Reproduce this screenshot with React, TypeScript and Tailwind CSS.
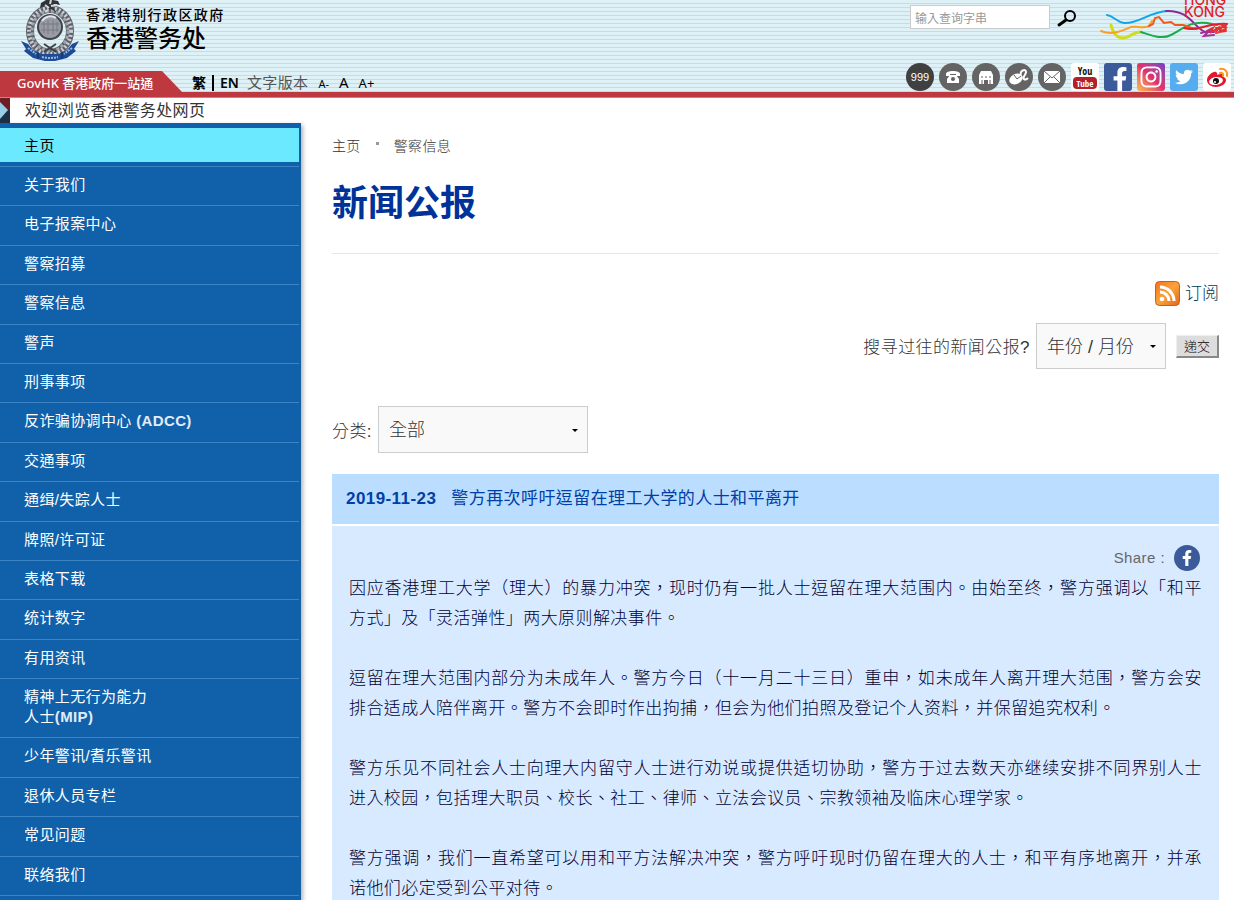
import { useState } from "react";
import { FaFacebookF, FaInstagram, FaTwitter } from "react-icons/fa";

const menu = [
  { lines: ["关于我们"] },
  { lines: ["电子报案中心"] },
  { lines: ["警察招募"] },
  { lines: ["警察信息"] },
  { lines: ["警声"] },
  { lines: ["刑事事项"] },
  { lines: ["反诈骗协调中心 "], suffix: "(ADCC)" },
  { lines: ["交通事项"] },
  { lines: ["通缉/失踪人士"] },
  { lines: ["牌照/许可证"] },
  { lines: ["表格下载"] },
  { lines: ["统计数字"] },
  { lines: ["有用资讯"] },
  { lines: ["精神上无行为能力", "人士"], suffix: "(MIP)" },
  { lines: ["少年警讯/耆乐警讯"] },
  { lines: ["退休人员专栏"] },
  { lines: ["常见问题"] },
  { lines: ["联络我们"] },
];

const paragraphs = [
  "因应香港理工大学（理大）的暴力冲突，现时仍有一批人士逗留在理大范围内。由始至终，警方强调以「和平方式」及「灵活弹性」两大原则解决事件。",
  "逗留在理大范围内部分为未成年人。警方今日（十一月二十三日）重申，如未成年人离开理大范围，警方会安排合适成人陪伴离开。警方不会即时作出拘捕，但会为他们拍照及登记个人资料，并保留追究权利。",
  "警方乐见不同社会人士向理大内留守人士进行劝说或提供适切协助，警方于过去数天亦继续安排不同界别人士进入校园，包括理大职员、校长、社工、律师、立法会议员、宗教领袖及临床心理学家。",
  "警方强调，我们一直希望可以用和平方法解决冲突，警方呼吁现时仍留在理大的人士，和平有序地离开，并承诺他们必定受到公平对待。",
];

function Emblem() {
  return (
    <svg width="60" height="64" viewBox="0 0 60 64" aria-hidden="true">
      <ellipse cx="30" cy="31" rx="20" ry="22" fill="none" stroke="#5d616a" strokeWidth="8" />
      <ellipse cx="30" cy="31" rx="21" ry="23" fill="none" stroke="#c9ccd1" strokeWidth="4" strokeDasharray="2 2" />
      <ellipse cx="30" cy="31" rx="18" ry="20" fill="none" stroke="#a1a5ad" strokeWidth="3" strokeDasharray="3 2" />
      <circle cx="30" cy="28" r="14" fill="#dcebf0" />
      <circle cx="30" cy="27" r="13" fill="#3f434b" />
      <circle cx="30" cy="27" r="11" fill="#989ba2" />
      <path d="M21 24h18M21 30h18M24 22v11M28 20v14M33 20v14M37 22v10" stroke="#777b83" />
      <path d="M22 21c3-5 10-6 14-3" stroke="#e2e4e7" strokeWidth="2" fill="none" />
      <path d="M30 10l-5-4-5 2 1-5 5-3-1-4h7l1 4 5 1 2 4-6-1-1 3 3 5-5-3-5 4z" fill="#30333a" />
      <path d="M29 8l-4-3M31 6l6-1M30 4l1-4M28 10l-3 2" stroke="#d7d9dc" strokeWidth="2" />
      <path d="M25 51l5-3 5 3M24 44l12 8M36 44l-12 8" stroke="#3c4047" strokeWidth="2" fill="none" />
      <path d="M1 41l7 3 5 6 8 4h18l8-4 5-6 7-3-5 8 2 2-9 7-12 3h-10l-12-3-9-7 2-2z" fill="#1d4b96" />
      <path d="M18 52v7M42 52v7" stroke="#0f2c61" />
      <path d="M8 48l8 6M52 48l-8 6M22 57q8 2 16 0" stroke="#9cb8e0" strokeWidth="2" strokeDasharray="2 1" fill="none" />
    </svg>
  );
}

function BrandHongKong() {
  return (
    <svg width="134" height="44" viewBox="0 0 134 44" aria-label="Hong Kong" role="img">
      <g fill="none" strokeLinecap="round" strokeWidth="2">
        <path d="M7 15c7 1 9 7 17 8 15 1 24-11 44-12" stroke="#12a5e8" />
        <path d="M66 11c24-1 27 16 39 21h9" stroke="#8c2a93" />
        <path d="M11 25c2 8 5 13 12 13 8 0 10-7 18-6" stroke="#cfdc21" strokeWidth="3" />
        <path d="M41 32c10 3 20 8 30 3 12-6 18-14 36-12l10 2" stroke="#1aab4c" />
        <path d="M1 31c12 5 22-1 30-4 10-1 14 2 18-1l3-5" stroke="#f7a021" strokeWidth="2" />
        <path d="M49 26l4-2 2-6 4-1 5 6 7-1 4 3 8 0c6 1 7 4 14 4" stroke="#f0581f" />
        <path d="M84 28c15 4 25-6 43-4" stroke="#e31e2b" />
        <path d="M107 31l6-3-3 5 8-5-2 5M114 31l8-4-3 5 7-3M116 28l9-1-5-3 6 2M119 32l7-1" stroke="#e5322d" />
        <path d="M101 33l8-2-5 5 10-1" stroke="#a5309a" />
      </g>
      <g fill="#e31e2b" fontFamily="Inter, sans-serif" fontSize="14" fontWeight="500">
        <text x="84" y="5">HONG</text>
        <text x="84" y="17">KONG</text>
      </g>
    </svg>
  );
}

const round = "flex size-7 items-center justify-center rounded-full bg-[#646464] text-white";
const square = "flex size-7 items-center justify-center rounded-[3px]";

function QuickLinks() {
  return (
    <nav aria-label="快速连结" className="flex gap-[5px]">
      <a href="#999" className="flex size-7 items-center justify-center rounded-full bg-[#404040] text-[11px] text-white">999</a>
      <a href="#phone" aria-label="电话" className={round}>
        <svg width="18" height="18" viewBox="0 0 18 18" fill="currentColor">
          <path d="M2 6c0-2 3-3 7-3s7 1 7 3v2h-4V6H6v2H2z" />
          <path d="M6 7h6l3 4v4H3v-4z" />
          <circle cx="9" cy="11" r="2" fill="#646464" />
        </svg>
      </a>
      <a href="#stations" aria-label="警署" className={round}>
        <svg width="18" height="18" viewBox="0 0 18 18" fill="currentColor">
          <path d="M4 3h10l2 4v9h-5v-4H7v4H2V7z" />
          <path d="M4 9h2M8 9h2M12 9h2M5 12v4M9 12v4M13 12v4" stroke="#646464" />
        </svg>
      </a>
      <a href="#e-report" aria-label="网上报案" className={round}>
        <svg width="22" height="20" viewBox="0 0 22 20" fill="none">
          <ellipse cx="8" cy="12" rx="7" ry="5" fill="currentColor" transform="rotate(-25 8 12)" />
          <path d="M6 8l3 4 4-3" stroke="#646464" />
          <path d="M13 8c-2-4 5-7 5-3 0 3-4 5-2 7 1 1 3 0 4-1" stroke="currentColor" strokeWidth="2" />
        </svg>
      </a>
      <a href="#mail" aria-label="电邮" className={round}>
        <svg width="16" height="12" viewBox="0 0 16 12">
          <path d="M0 0h16v12H0z" fill="currentColor" />
          <path d="M0 0l8 7 8-7M0 12l6-6M16 12l-6-6" stroke="#646464" fill="none" />
        </svg>
      </a>
      <a href="#youtube" aria-label="YouTube" className={`${square} bg-white`}>
        <svg width="26" height="26" viewBox="0 0 26 26" fontFamily="'Open Sans Condensed', 'Open Sans', sans-serif" fontWeight="700" textAnchor="middle">
          <rect x="1" y="13" width="24" height="12" rx="4" fill="#b3202a" />
          <text x="13" y="11" fontSize="10" fill="#111">You</text>
          <text x="13" y="23" fontSize="9" fill="#fff">Tube</text>
        </svg>
      </a>
      <a href="#facebook" aria-label="Facebook" className="flex size-7 items-end justify-end rounded-[3px] bg-[#3b5a9a] text-white">
        <FaFacebookF size={24} />
      </a>
      <a href="#instagram" aria-label="Instagram" className={`${square} bg-linear-to-tr from-[#fcbb45] via-[#e0306c] to-[#7638c8] text-white`}>
        <FaInstagram size={24} />
      </a>
      <a href="#twitter" aria-label="Twitter" className={`${square} bg-[#55acee] text-white`}>
        <FaTwitter size={18} />
      </a>
      <a href="#weibo" aria-label="微博" className={`${square} bg-white`}>
        <svg width="24" height="24" viewBox="0 0 24 24">
          <path d="M2 15c0-4 6-9 9-8 2 1 1 3 1 3s5-2 6 0c1 1 0 2 0 2 2 0 3 2 3 3 0 4-5 7-10 7s-9-3-9-7z" fill="#e6162d" />
          <ellipse cx="11" cy="16" rx="7" ry="4" fill="#fff" transform="rotate(-8 11 16)" />
          <circle cx="11" cy="16" r="3" fill="#111" />
          <circle cx="10" cy="17" r="1" fill="#fff" />
          <path d="M15 4c5-1 8 3 7 7M15 8c2-1 4 1 3 3" fill="none" stroke="#f59a23" strokeWidth="2" strokeLinecap="round" />
        </svg>
      </a>
    </nav>
  );
}

function Header() {
  return (
    <header className="flex justify-between border-b-[5px] border-[#bd383f] bg-[repeating-linear-gradient(#def1f6_0px,#def1f6_3px,#bbe0e9_3px,#bbe0e9_4px)]">
      <div>
        <a href="#home" className="flex h-[71px] items-start gap-[6px] pl-5 text-black">
          <Emblem />
          <span className="flex flex-col pt-[5px] font-medium">
            <span className="text-[14px] leading-5 tracking-widest">香港特别行政区政府</span>
            <span className="text-[24px] leading-7">香港警务处</span>
          </span>
        </a>
        <div className="flex h-[21px] items-center text-[14px] text-black">
          <a
            href="#govhk"
            className="flex h-full w-[182px] items-center bg-[#bd383f] pt-[5px] pl-[17px] font-['Noto_Sans','Noto_Sans_CJK_TC',sans-serif] text-[13px] font-medium text-white [clip-path:polygon(0_0,162px_0,100%_100%,0_100%)]"
          >
            GovHK 香港政府一站通
          </a>
          <nav aria-label="语言" className="flex items-center pt-[2px] pl-[10px] font-['Noto_Sans','Noto_Sans_CJK_TC',sans-serif]">
            <a href="#tc" className="border-r-2 border-black pr-[6px] leading-4 font-bold">繁</a>
            <a href="#en" className="pl-[6px] font-semibold">EN</a>
            <a href="#text" className="pl-2 text-[15px] tracking-wide text-[#555]">文字版本</a>
          </nav>
          <div className="flex items-baseline gap-[10px] pt-px pl-[10px] font-['Noto_Sans',sans-serif]">
            <button type="button" className="text-[11px]">A-</button>
            <button type="button" className="text-[15px]">A</button>
            <button type="button" className="text-[13px]">A+</button>
          </div>
        </div>
      </div>

      <div className="flex flex-col justify-between pr-[3px] pb-px">
        <div className="flex items-start justify-between">
          <form className="flex items-center gap-[6px] pt-[5px] pl-1" onSubmit={(e) => e.preventDefault()}>
            <input
              type="text"
              aria-label="输入查询字串"
              placeholder="输入查询字串"
              className="h-6 w-[140px] border border-[#ccc] bg-white px-1 pt-1 text-[12px] placeholder:text-[#999]"
            />
            <button type="submit" aria-label="搜寻" className="pt-1">
              <svg width="20" height="18" viewBox="0 0 20 18" fill="none" stroke="#000">
                <circle cx="14" cy="6" r="5" strokeWidth="2" />
                <path d="M10 10l-7 5" strokeWidth="3" strokeLinecap="round" />
              </svg>
            </button>
          </form>
          <div className="-mr-[3px]">
            <BrandHongKong />
          </div>
        </div>
        <QuickLinks />
      </div>
    </header>
  );
}

function Sidebar() {
  return (
    <aside className="w-[301px] shrink-0">
      <div className="flex h-[25px] bg-white">
        <svg width="10" height="25" viewBox="0 0 10 25" aria-hidden="true">
          <path d="M0 0h10v13H0z" fill="#701c24" />
          <path d="M0 12h10v13H0z" fill="#1b3047" />
          <path d="M0 4l8 8-8 9z" fill="#96cfe5" />
        </svg>
        <p className="pl-[15px] text-[16px] leading-[25px] tracking-wide text-[#333]">欢迎浏览香港警务处网页</p>
      </div>
      <nav aria-label="主目录" className="h-[calc(100%-25px)] bg-[#1061aa] pt-[5px] pr-[2px] text-[15px] leading-5 tracking-wide text-white shadow-[2px_2px_4px_rgba(0,0,0,0.3)]">
        <a href="#home" className="mb-1 block h-[34px] bg-[#6be9ff] pt-2 pl-6 text-black">主页</a>
        <ul className="flex min-h-[730px] flex-col border-t border-[#3c84c4]">
          {menu.map((item) => (
            <li key={item.lines[0]} className="grow border-b border-[#3c84c4]">
              <a href="#menu" className="block pt-2 pb-[10px] pl-6">
                {item.lines.map((line, i) => (
                  <span key={line} className="block whitespace-pre">
                    {line}
                    {item.suffix && i === item.lines.length - 1 && <b className="text-[#e0ecf8]">{item.suffix}</b>}
                  </span>
                ))}
              </a>
            </li>
          ))}
        </ul>
      </nav>
    </aside>
  );
}

function Arrow() {
  return (
    <svg width="6" height="4" viewBox="0 0 6 4" className="pointer-events-none absolute top-1/2 right-[10px] -mt-px" aria-hidden="true">
      <path d="M0 0h6L3 3z" fill="#000" />
    </svg>
  );
}

const selectStyle = "w-full appearance-none border border-[#ccc] bg-[#f9f9f9] pt-[2px] pl-[10px] text-[18px] font-light text-[#333]";

export default function App() {
  const [month, setMonth] = useState("");
  const [category, setCategory] = useState("all");

  return (
    <div className="flex min-h-screen flex-col bg-white font-['Liberation_Sans','Noto_Sans_CJK_TC',sans-serif]">
      <Header />
      <div className="flex grow border-t border-[#999]">
        <Sidebar />
        <main className="min-w-0 grow pt-9 pr-[15px] pl-[31px]">
          <nav aria-label="路径" className="flex gap-[15px] text-[14px] leading-6 font-light tracking-wide text-[#333]">
            <a href="#home">主页</a>
            <span className="mt-2 size-[3px] bg-[#999]" />
            <a href="#info">警察信息</a>
          </nav>

          <h1 className="border-b border-[#e7e7e7] pt-[18px] pb-[29px] font-['Noto_Sans_CJK_SC',sans-serif] text-[36px] leading-12 font-bold text-[#003399]">
            新闻公报
          </h1>

          <div className="flex justify-end pt-[27px]">
            <a href="#rss" className="flex items-center gap-[5px] text-[17px] leading-[25px] font-light text-[#003b50]">
              <svg width="25" height="25" viewBox="0 0 25 25" aria-hidden="true">
                <defs>
                  <linearGradient id="rss" x1="0" y1="0" x2="1" y2="1">
                    <stop offset="0" stopColor="#ef7420" />
                    <stop offset="0.5" stopColor="#fba33b" />
                    <stop offset="1" stopColor="#e0651a" />
                  </linearGradient>
                </defs>
                <rect x="0.5" y="0.5" width="24" height="24" rx="4" fill="url(#rss)" stroke="#cf5c18" />
                <circle cx="7" cy="18" r="2.3" fill="#fff" />
                <path d="M5 11a9 9 0 0 1 9 9M5 6a14 14 0 0 1 14 14" fill="none" stroke="#fff" strokeWidth="3" />
              </svg>
              订阅
            </a>
          </div>

          <form className="flex items-center justify-end pt-[17px]" onSubmit={(e) => e.preventDefault()}>
            <label htmlFor="month" className="pt-1 text-[17px] font-light tracking-wide text-[#333]">搜寻过往的新闻公报?</label>
            <div className="relative ml-[6px] w-[130px]">
              <select id="month" value={month} onChange={(e) => setMonth(e.target.value)} className={`${selectStyle} h-[46px]`}>
                <option value="">年份 / 月份</option>
                <option value="2019-11">2019 / 11</option>
              </select>
              <Arrow />
            </div>
            <button type="submit" className="ml-[10px] h-[23px] w-[43px] border-t border-r-2 border-b-2 border-l border-t-[#eee] border-r-[#888] border-b-[#888] border-l-[#eee] bg-[#ddd] pt-px text-[13px] leading-5 font-light text-black">
              递交
            </button>
          </form>

          <div className="flex items-center pt-[37px]">
            <label htmlFor="category" className="pt-1 text-[17px] font-light tracking-wide text-[#333]">分类:</label>
            <div className="relative ml-[6px] w-[210px]">
              <select id="category" value={category} onChange={(e) => setCategory(e.target.value)} className={`${selectStyle} h-[47px]`}>
                <option value="all">全部</option>
              </select>
              <Arrow />
            </div>
          </div>

          <article className="mt-[21px] text-[17px] tracking-wide">
            <h2 className="flex gap-[15px] bg-[#bbddff] px-[14px] leading-[50px] text-[#003fa5]">
              <time className="font-bold">2019-11-23</time>
              警方再次呼吁逗留在理工大学的人士和平离开
            </h2>
            <div className="mt-[2px] bg-[#d8eaff] px-[17px] pt-[19px]">
              <div className="flex items-center justify-end gap-[9px] pr-[2px] text-[15px] leading-[26px] text-[#666]">
                Share :
                <a href="#share" aria-label="Facebook" className="flex size-[26px] items-center justify-center rounded-full bg-[#3b5a9a] text-white">
                  <FaFacebookF size={16} />
                </a>
              </div>
              <div className="flex flex-col gap-[30px] pt-[3px] text-justify leading-[30px] font-light text-[#000033]">
                {paragraphs.map((text) => (
                  <p key={text}>{text}</p>
                ))}
              </div>
            </div>
          </article>
        </main>
      </div>
    </div>
  );
}
